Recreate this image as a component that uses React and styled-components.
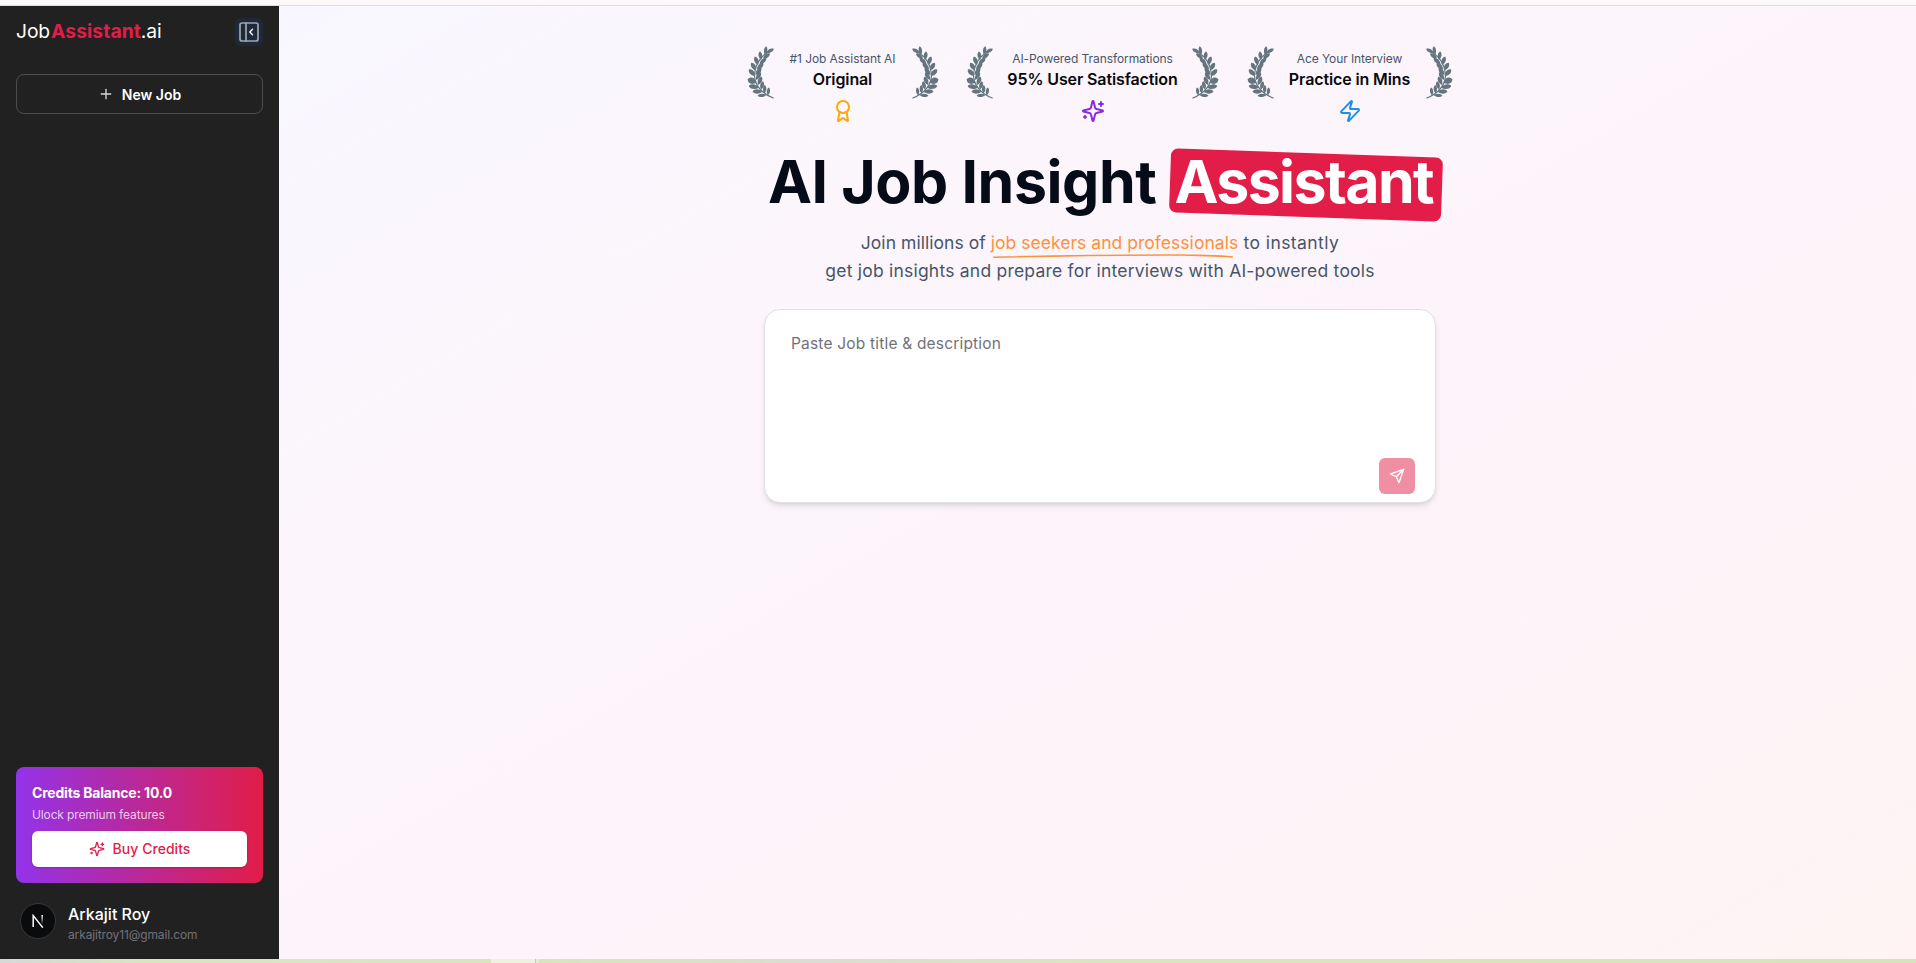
import React from "react";
import styled, { createGlobalStyle } from "styled-components";
import { Plus, Award, Zap } from "lucide-react";

const GlobalStyle = createGlobalStyle`
  *, *::before, *::after { box-sizing: border-box; }
  body {
    margin: 0;
    font-family: Inter, "Liberation Sans", sans-serif;
    color: #09090b;
  }
  button { font: inherit; cursor: pointer; }
`;

const Page = styled.div`
  height: 963px;
  display: flex;
  flex-direction: column;
  overflow: hidden;
`;

const TopStrip = styled.div`
  flex: none;
  height: 6px;
  background: #fdf8fa;
  border-bottom: 1px solid #dedcde;
`;

const BottomStrip = styled.div`
  flex: none;
  height: 4px;
  display: flex;
`;

const StripPart = styled.div`
  ${p => (p.$width ? `flex: none; width: ${p.$width}px;` : "flex: 1;")}
  background: ${p => p.$fill};
`;

const Shell = styled.div`
  flex: 1;
  min-height: 0;
  display: flex;
`;

const Sidebar = styled.aside`
  flex: none;
  width: 279px;
  padding: 12px 16px 16px;
  display: flex;
  flex-direction: column;
  background: #212121;
  color: #fff;
`;

const SidebarHeader = styled.div`
  display: flex;
  justify-content: space-between;
  align-items: flex-start;
  height: 28px;
`;

const Brand = styled.div`
  font-size: 19.3px;
  line-height: 26px;
  letter-spacing: -0.1px;
  white-space: nowrap;

  b { color: #e11d48; font-weight: 700; letter-spacing: 0.06px; margin-left: 1px; }
`;

const ToggleButton = styled.button`
  width: 28px;
  height: 28px;
  padding: 0;
  display: grid;
  place-items: center;
  border: 0;
  border-radius: 6px;
  background: #1e293b;
`;

const NewJobButton = styled.button`
  margin-top: 28px;
  height: 40px;
  display: flex;
  align-items: center;
  justify-content: center;
  gap: 8px;
  border: 1px solid #4d4d4d;
  border-radius: 8px;
  background: transparent;
  color: #fff;
  font-size: 14px;
  font-weight: 600;

  svg { color: #d8d8d8; }
`;

const CreditsCard = styled.section`
  margin-top: auto;
  height: 116px;
  padding: 16px;
  display: flex;
  flex-direction: column;
  border-radius: 8px;
  background: linear-gradient(to right, #9333ea, #e11d48);
`;

const CreditsTitle = styled.div`
  font-size: 14px;
  line-height: 20px;
  font-weight: 700;
  letter-spacing: -0.2px;
`;

const CreditsNote = styled.div`
  margin-top: 4px;
  font-size: 12px;
  line-height: 16px;
  letter-spacing: -0.13px;
  color: rgba(255, 255, 255, 0.76);
`;

const BuyButton = styled.button`
  margin-top: 8px;
  height: 36px;
  padding: 0 0 1px;
  display: flex;
  align-items: center;
  justify-content: center;
  gap: 8px;
  border: 0;
  border-radius: 6px;
  background: #fff;
  box-shadow: 0 1px 2px rgba(0, 0, 0, 0.2);
  color: #e11d48;
  font-size: 14px;
  font-weight: 550;
  letter-spacing: 0.04px;
`;

const UserRow = styled.div`
  margin-top: 20px;
  padding-left: 4px;
  display: flex;
  gap: 12px;
`;

const Avatar = styled.div`
  width: 36px;
  height: 36px;
  display: grid;
  place-items: center;
  border: 1px solid #37373a;
  border-radius: 50%;
  background: #0a0b0c;
`;

const UserName = styled.div`
  margin-top: -1px;
  padding-bottom: 1px;
  font-size: 16px;
  line-height: 24px;
  font-weight: 550;
`;

const UserEmail = styled.div`
  font-size: 12px;
  line-height: 16px;
  letter-spacing: -0.13px;
  color: #71717a;
`;

const Main = styled.main`
  flex: 1;
  padding: 40px 0 0 5px;
  display: flex;
  flex-direction: column;
  align-items: center;
  background: linear-gradient(to bottom right, #f8f7ff 0%, #fcf5fc 28%, #fdf4fa 62%, #fff3f3 100%);
`;

const BadgeRow = styled.div`
  padding-right: 1px;
  display: flex;
  gap: 27.5px;
`;

const BadgeBox = styled.div`
  display: flex;
  align-items: flex-start;
`;

const BadgeBody = styled.div`
  width: ${p => p.$width}px;
  padding-top: 5px;
  display: flex;
  flex-direction: column;
  align-items: center;
  white-space: nowrap;

  svg { margin-top: 8px; }
`;

const BadgeCaption = styled.div`
  font-size: 12px;
  line-height: 16px;
  letter-spacing: -0.08px;
  color: #475569;
`;

const BadgeTitle = styled.div`
  font-size: 16px;
  line-height: 24px;
  font-weight: 600;
  letter-spacing: -0.12px;
`;

const LaurelSvg = styled.svg`
  display: block;
  fill: #64757f;
  ${p => (p.$flip ? "transform: scaleX(-1);" : "")}
`;

const Headline = styled.h1`
  margin: 29px 0 0;
  padding-left: 1px;
  display: flex;
  gap: 18px;
  font-size: 59px;
  line-height: 60px;
  font-weight: 700;
  letter-spacing: -0.42px;
  color: #060b18;
  white-space: nowrap;
`;

const Highlight = styled.span`
  position: relative;
  z-index: 0;
  letter-spacing: -1.6px;
  color: #fff;

  &::before {
    content: "";
    position: absolute;
    z-index: -1;
    inset: 0.5px -9px -4.5px -4px;
    border-radius: 7px;
    background: #e11d48;
    transform: rotate(2deg);
  }
`;

const Lead = styled.p`
  margin: 17px 0 24px;
  font-size: 17.5px;
  line-height: 28px;
  text-align: center;
  color: #475569;
  white-space: nowrap;
`;

const LeadLine = styled.span`
  display: block;
  letter-spacing: ${p => p.$spacing}px;
`;

const LeadTail = styled.span`
  letter-spacing: 0.42px;
`;

const Accent = styled.span`
  position: relative;
  letter-spacing: 0.03px;
  color: #fb923c;

  svg { position: absolute; left: 2px; top: 20.5px; }
`;

const Composer = styled.div`
  width: 672px;
  height: 194px;
  padding: 22px 20px 8px 26px;
  display: flex;
  flex-direction: column;
  justify-content: space-between;
  border: 1px solid #e1e1e6;
  border-radius: 16px;
  background: #fff;
  box-shadow: 0 4px 6px -1px rgba(0, 0, 0, 0.1), 0 2px 4px -2px rgba(0, 0, 0, 0.1);
`;

const Placeholder = styled.div`
  font-size: 15.5px;
  line-height: 24px;
  letter-spacing: 0.19px;
  color: #71717a;
`;

const SendButton = styled.button`
  align-self: flex-end;
  width: 36px;
  height: 36px;
  padding: 0;
  display: grid;
  place-items: center;
  border: 0;
  border-radius: 6px;
  background: #f08ea3;
  color: #fff;
`;

const Sparkle = ({ size, strokeWidth = 2, color = "currentColor" }) => (
  <svg width={size} height={size} viewBox="0 0 24 24" fill="none" stroke={color} strokeWidth={strokeWidth} strokeLinecap="round" strokeLinejoin="round">
    <path d="M9.937 15.5A2 2 0 0 0 8.5 14.063l-6.135-1.582a.5.5 0 0 1 0-.962L8.5 9.936A2 2 0 0 0 9.937 8.5l1.582-6.135a.5.5 0 0 1 .963 0L14.063 8.5A2 2 0 0 0 15.5 9.937l6.135 1.581a.5.5 0 0 1 0 .964L15.5 14.063a2 2 0 0 0-1.437 1.437l-1.582 6.135a.5.5 0 0 1-.963 0z" />
    <path d="M20 3v4M22 5h-4M4 17v2M5 18H3" />
  </svg>
);

const PanelIcon = () => (
  <svg width="24" height="24" viewBox="0 0 24 24" fill="none" strokeLinecap="round" strokeLinejoin="round">
    <g stroke="#a3a6aa" strokeWidth="1.7">
      <rect x="3" y="3" width="18" height="18" rx="2" />
      <path d="M9 3v18" />
    </g>
    <path d="m15.500 14.700-2.700-2.700 2.700-2.700" stroke="#fff" strokeWidth="1.4" />
  </svg>
);

const PlaneIcon = () => (
  <svg width="16" height="16" viewBox="0 0 24 24" fill="none" stroke="currentColor" strokeWidth="2" strokeLinecap="round" strokeLinejoin="round">
    <path d="m22 2-7 20-4-9-9-4Z" />
    <path d="M22 2 11 13" />
  </svg>
);

const Monogram = () => (
  <svg width="14" height="14" viewBox="0 0 14 14" fill="none" strokeWidth="1.5">
    <defs>
      <linearGradient id="stem" x1="0" y1="0" x2="0" y2="1">
        <stop offset="0" stopColor="#fff" />
        <stop offset="1" stopColor="#fff" stopOpacity="0.1" />
      </linearGradient>
    </defs>
    <path d="M2.2 13V1.6L11.8 13.6" stroke="#fff" />
    <rect x="10.4" y="1" width="1.5" height="8.5" fill="url(#stem)" />
  </svg>
);

/* Each leaf: base x, base y, rotation in degrees from straight up, length, half-width. */
const LEAVES = [
  [19, 7, 62, 8.8, 2],
  [18, 9, 8, 8.8, 1.8],
  [16, 12.5, 54, 8.5, 2],
  [14, 14, -8, 8.5, 2],
  [12.5, 18, 50, 9, 2.1],
  [11, 19, -20, 9, 2.2],
  [10, 23.5, 45, 9, 2.2],
  [9, 24.5, -32, 9, 2.3],
  [8.5, 29, 40, 9, 2.2],
  [8, 30, -42, 9, 2.4],
  [9, 34, 32, 9, 2.2],
  [9.5, 36.5, -70, 9.5, 3.3],
  [11, 39, 24, 9, 2.2],
  [12, 41.5, -82, 10.5, 2.5],
  [14, 43.5, 14, 8.5, 2],
  [15.5, 45.5, -90, 10, 2.3],
  [17.5, 47.5, 2, 8.5, 1.8],
  [19.5, 49, -94, 9, 1.8],
  [20.8, 49.3, 8, 8, 1.7],
];

const Laurel = ({ flip }) => (
  <LaurelSvg $flip={flip} width="27" height="53" viewBox="0 0 27 53">
    <path d="M26.2 52C15 48 6.5 38 7.6 27.500C8.600 18 14 11 19.500 7" fill="none" stroke="#64757f" strokeWidth="1.2" strokeLinecap="round" />
    {LEAVES.map(([x, y, angle, length, half], i) => (
      <path
        key={i}
        d={`M0 0C${-half * 1.3} ${-length * 0.35} ${-half * 1.2} ${-length * 0.8} 0 ${-length}C${half * 1.2} ${-length * 0.8} ${half * 1.3} ${-length * 0.35} 0 0Z`}
        transform={`translate(${x} ${y}) rotate(${angle})`}
      />
    ))}
  </LaurelSvg>
);

const Badge = ({ caption, title, width, icon }) => (
  <BadgeBox>
    <Laurel />
    <BadgeBody $width={width}>
      <BadgeCaption>{caption}</BadgeCaption>
      <BadgeTitle>{title}</BadgeTitle>
      {icon}
    </BadgeBody>
    <Laurel flip />
  </BadgeBox>
);

export default function App() {
  return (
    <Page>
      <GlobalStyle />
      <TopStrip />
      <Shell>
        <Sidebar>
          <SidebarHeader>
            <Brand>Job<b>Assistant</b>.ai</Brand>
            <ToggleButton aria-label="Collapse sidebar"><PanelIcon /></ToggleButton>
          </SidebarHeader>
          <NewJobButton><Plus size={16} strokeWidth={2} />New Job</NewJobButton>
          <CreditsCard>
            <CreditsTitle>Credits Balance: 10.0</CreditsTitle>
            <CreditsNote>Ulock premium features</CreditsNote>
            <BuyButton><Sparkle size={16} />Buy Credits</BuyButton>
          </CreditsCard>
          <UserRow>
            <Avatar><Monogram /></Avatar>
            <div>
              <UserName>Arkajit Roy</UserName>
              <UserEmail>arkajitroy11@gmail.com</UserEmail>
            </div>
          </UserRow>
        </Sidebar>
        <Main>
          <BadgeRow>
            <Badge caption="#1 Job Assistant AI" title="Original" width={138} icon={<Award size={24} color="#ffa60d" />} />
            <Badge caption="AI-Powered Transformations" title="95% User Satisfaction" width={199} icon={<Sparkle size={24} color="#8a2be2" />} />
            <Badge caption="Ace Your Interview" title="Practice in Mins" width={152} icon={<Zap size={24} color="#1e8fe8" />} />
          </BadgeRow>
          <Headline>
            <span>AI Job Insight</span>
            <Highlight>Assistant</Highlight>
          </Headline>
          <Lead>
            <LeadLine $spacing={0.05}>
              Join millions of{" "}
              <Accent>
                job seekers and professionals
                <svg width="242" height="6" viewBox="0 0 242 6" fill="#fb923c" aria-hidden="true">
                  <path d="M0 3.400C60 2.400 120 1.200 180 1.300C205 1.400 225 2 240 3.200L239.500 4.800C225 3.600 205 3 180 2.800C120 2.600 60 4 0.500 4.900Z" />
                </svg>
              </Accent>
              <LeadTail>{" "}to instantly</LeadTail>
            </LeadLine>
            <LeadLine $spacing={0.22}>get job insights and prepare for interviews with AI-powered tools</LeadLine>
          </Lead>
          <Composer>
            <Placeholder>Paste Job title &amp; description</Placeholder>
            <SendButton aria-label="Send"><PlaneIcon /></SendButton>
          </Composer>
        </Main>
      </Shell>
      <BottomStrip>
        <StripPart $width={491} $fill="linear-gradient(to right, #d6d8d8, #dae4bf 30%, #dbe3c4 70%, #d9e5ba)" />
        <StripPart $width={44} $fill="#eef2de" />
        <StripPart $width={1} $fill="#c0cfa6" />
        <StripPart $width={3} $fill="#e6ecd2" />
        <StripPart $fill="linear-gradient(to right, #d9e5b8, #dcdcd2 20%, #dbe4c0 40%, #d9e3b8)" />
      </BottomStrip>
    </Page>
  );
}
